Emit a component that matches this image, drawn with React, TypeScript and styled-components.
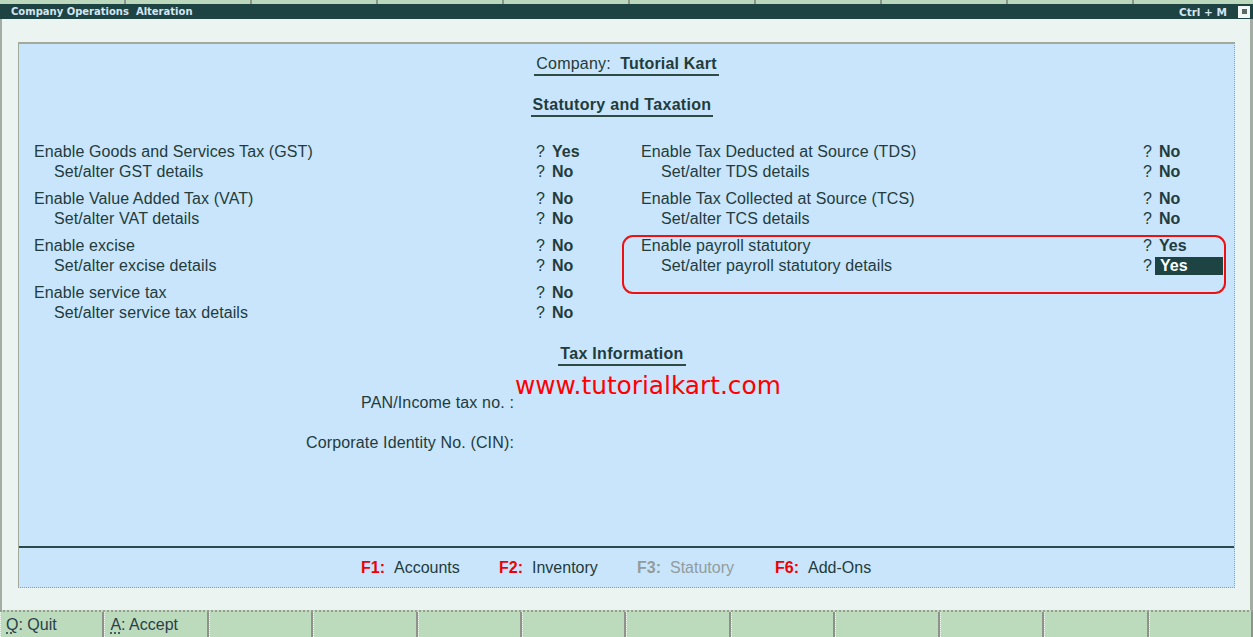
import React from "react";
import styled, { createGlobalStyle } from "styled-components";

const Global = createGlobalStyle`
  html, body { margin: 0; padding: 0; background: #ecf4f2; }
  body { font-family: "Liberation Sans", Arial, sans-serif; }
`;

const Page = styled.div`
  width: 1253px;
  height: 637px;
  display: flex;
  flex-direction: column;
  overflow: hidden;
  font-family: "Liberation Sans", Arial, sans-serif;
  color: #233b3b;
`;

const TopStrip = styled.div`
  height: 4px;
  flex: none;
  background: repeating-linear-gradient(
    90deg,
    #bcd8bc 0px,
    #bcd8bc 124px,
    #8c948c 124px,
    #8c948c 126px
  );
`;

const TitleBar = styled.div`
  height: 15px;
  flex: none;
  background: #1e4343;
  display: flex;
  align-items: center;
  padding: 0 3px 0 11px;
  font-family: "DejaVu Sans", Verdana, sans-serif;
  font-weight: bold;
  font-size: 10px;
  color: #d4e6f2;
`;

const TitleText = styled.span`
  flex: 1;
  white-space: pre;
`;

const Shortcut = styled.span`
  margin-right: 11px;
  font-size: 10.5px;
`;

const CloseBox = styled.span`
  width: 12px;
  height: 12px;
  background: #f2f6f4;
  display: flex;
  align-items: center;
  justify-content: center;
  &::after {
    content: "";
    width: 5px;
    height: 5px;
    background: #5a6a66;
  }
`;

const Main = styled.div`
  flex: 1;
  display: flex;
  background: #ecf4f2;
  border-left: 2px solid #a4aca4;
  border-right: 3px solid #a4aca4;
  padding: 23px 15px 22px 16px;
`;

const Panel = styled.div`
  flex: 1;
  display: flex;
  flex-direction: column;
  background: #c8e5fc;
  border-top: 2px solid #a2aa9c;
  border-left: 1px solid #a2aa9c;
  border-right: 1px dotted #8aa0a8;
  border-bottom: 1px dotted #8aa0a8;
`;

const Content = styled.div`
  flex: 1;
  display: flex;
  flex-direction: column;
  font-size: 16px;
  line-height: 20px;
`;

const Heading = styled.div<{ $top: number; $bold?: boolean }>`
  align-self: center;
  margin-top: ${(p) => p.$top}px;
  margin-right: ${(p) => (p.$bold ? 9 : 0)}px;
  padding: 0 2px;
  font-weight: ${(p) => (p.$bold ? "bold" : "normal")};
  letter-spacing: ${(p) => (p.$bold ? 0.3 : 0.2)}px;
  border-bottom: 2px solid #2e4c44;
  white-space: pre;
`;

const Strong = styled.b`
  font-weight: bold;
`;

const Fields = styled.div`
  margin-top: 25px;
  padding-left: 15px;
  display: grid;
  grid-template-columns: 607px 1fr;
`;

const Column = styled.div`
  display: flex;
  flex-direction: column;
  gap: 7px;
`;

const Group = styled.div`
  position: relative;
  display: flex;
  flex-direction: column;
`;

const Annotation = styled.div`
  position: absolute;
  top: -1px;
  left: -19px;
  right: 8px;
  bottom: -18px;
  border: 2px solid #ee1111;
  border-radius: 11px;
  pointer-events: none;
`;

const Row = styled.div`
  display: grid;
  grid-template-columns: 502px 16px 1fr;
  height: 20px;
  align-items: center;
`;

const Label = styled.span<{ $sub?: boolean }>`
  padding-left: ${(p) => (p.$sub ? 20 : 0)}px;
  white-space: nowrap;
  letter-spacing: 0.1px;
`;

const Ask = styled.span``;

const Value = styled.span<{ $active?: boolean }>`
  font-weight: bold;
  justify-self: start;
  ${(p) =>
    p.$active
      ? `
    background: #1e4343;
    color: #ffffff;
    width: 63px;
    margin-left: -4px;
    padding-left: 5px;
    line-height: 18px;
  `
      : ""}
`;

const Watermark = styled.div`
  margin-top: 11px;
  height: 17px;
  line-height: 17px;
  padding-left: 496px;
  font-family: "DejaVu Sans", Verdana, sans-serif;
  font-size: 24.8px;
  color: #ff0000;
  white-space: nowrap;
`;

const InfoGrid = styled.div`
  display: grid;
  grid-template-columns: 496px 1fr;
  row-gap: 20px;
  margin-top: -1px;
`;

const InfoLabel = styled.span`
  text-align: right;
  padding-right: 1px;
  white-space: nowrap;
  letter-spacing: 0.15px;
`;

const Separator = styled.div`
  height: 2px;
  background: #2b4a4c;
  flex: none;
`;

const Footer = styled.div`
  height: 39px;
  flex: none;
  display: flex;
  align-items: center;
  padding-left: 342px;
  font-size: 16px;
`;

const FKey = styled.div<{ $off?: boolean }>`
  width: 138px;
  display: flex;
  color: ${(p) => (p.$off ? "#929c9c" : "#233b3b")};
  & > b {
    width: 33px;
    font-weight: bold;
    color: ${(p) => (p.$off ? "#929c9c" : "#ee0000")};
  }
`;

const BottomBar = styled.div`
  height: 25px;
  flex: none;
  display: grid;
  grid-template-columns: repeat(12, 1fr);
  border-top: 2px dotted #9a9c94;
  background: #bcdabc;
`;

const Cell = styled.div`
  border-left: 1px dotted #f4fff4;
  border-right: 2px solid #8e928a;
  padding-left: 5px;
  font-size: 16px;
  line-height: 25px;
  color: #2b3f4a;
  white-space: nowrap;
  & > u {
    text-decoration: underline;
    text-decoration-style: dotted;
    text-underline-offset: 3px;
  }
`;

type F = { label: string; value: string; sub?: boolean; active?: boolean };

const left: F[][] = [
  [
    { label: "Enable Goods and Services Tax (GST)", value: "Yes" },
    { label: "Set/alter GST details", value: "No", sub: true },
  ],
  [
    { label: "Enable Value Added Tax (VAT)", value: "No" },
    { label: "Set/alter VAT details", value: "No", sub: true },
  ],
  [
    { label: "Enable excise", value: "No" },
    { label: "Set/alter excise details", value: "No", sub: true },
  ],
  [
    { label: "Enable service tax", value: "No" },
    { label: "Set/alter service tax details", value: "No", sub: true },
  ],
];

const right: F[][] = [
  [
    { label: "Enable Tax Deducted at Source (TDS)", value: "No" },
    { label: "Set/alter TDS details", value: "No", sub: true },
  ],
  [
    { label: "Enable Tax Collected at Source (TCS)", value: "No" },
    { label: "Set/alter TCS details", value: "No", sub: true },
  ],
  [
    { label: "Enable payroll statutory", value: "Yes" },
    {
      label: "Set/alter payroll statutory details",
      value: "Yes",
      sub: true,
      active: true,
    },
  ],
];

function FieldGroup({ rows, marked }: { rows: F[]; marked?: boolean }) {
  return (
    <Group>
      {rows.map((r) => (
        <Row key={r.label}>
          <Label $sub={r.sub}>{r.label}</Label>
          <Ask>?</Ask>
          <Value $active={r.active}>{r.value}</Value>
        </Row>
      ))}
      {marked && <Annotation />}
    </Group>
  );
}

export default function App() {
  const cells = Array.from({ length: 10 });
  return (
    <Page>
      <Global />
      <TopStrip />
      <TitleBar>
        <TitleText>{"Company Operations  Alteration"}</TitleText>
        <Shortcut>Ctrl + M</Shortcut>
        <CloseBox />
      </TitleBar>
      <Main>
        <Panel>
          <Content>
            <Heading $top={10}>
              {"Company:  "}
              <Strong>Tutorial Kart</Strong>
            </Heading>
            <Heading $top={19} $bold>
              Statutory and Taxation
            </Heading>
            <Fields>
              <Column>
                {left.map((g, i) => (
                  <FieldGroup key={i} rows={g} />
                ))}
              </Column>
              <Column>
                {right.map((g, i) => (
                  <FieldGroup key={i} rows={g} marked={i === 2} />
                ))}
              </Column>
            </Fields>
            <Heading $top={21} $bold>
              Tax Information
            </Heading>
            <Watermark>www.tutorialkart.com</Watermark>
            <InfoGrid>
              <InfoLabel>PAN/Income tax no. :</InfoLabel>
              <span />
              <InfoLabel>Corporate Identity No. (CIN):</InfoLabel>
              <span />
            </InfoGrid>
          </Content>
          <Separator />
          <Footer>
            <FKey>
              <b>F1:</b>Accounts
            </FKey>
            <FKey>
              <b>F2:</b>Inventory
            </FKey>
            <FKey $off>
              <b>F3:</b>Statutory
            </FKey>
            <FKey>
              <b>F6:</b>Add-Ons
            </FKey>
          </Footer>
        </Panel>
      </Main>
      <BottomBar>
        <Cell>
          <u>Q</u>: Quit
        </Cell>
        <Cell>
          <u>A</u>: Accept
        </Cell>
        {cells.map((_, i) => (
          <Cell key={i} />
        ))}
      </BottomBar>
    </Page>
  );
}
